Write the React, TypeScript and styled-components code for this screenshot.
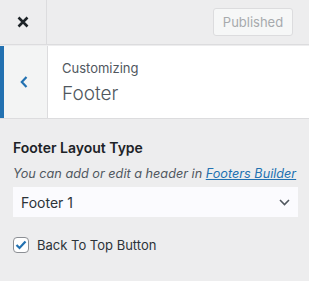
import React from 'react';
import styled, { createGlobalStyle } from 'styled-components';

const GlobalStyle = createGlobalStyle`
  html, body {
    margin: 0;
    padding: 0;
    background: #ededee;
  }
  body {
    font-family: Inter, "Liberation Sans", Arial, sans-serif;
    color: #1d2327;
  }
`;

const Panel = styled.div`
  width: 309px;
  height: 281px;
  background: #ededee;
  display: flex;
  flex-direction: column;
`;

const Header = styled.div`
  height: 44px;
  display: flex;
  align-items: stretch;
  border-bottom: 1px solid #dcdcde;
  background: #ededee;
`;

const CloseButton = styled.button`
  width: 47px;
  border: none;
  border-right: 1px solid #dcdcde;
  background: transparent;
  display: flex;
  align-items: center;
  justify-content: center;
  padding: 0;
`;

const HeaderActions = styled.div`
  flex: 1;
  display: flex;
  align-items: center;
  justify-content: flex-end;
  padding-right: 16px;
`;

const PublishButton = styled.button`
  width: 80px;
  height: 28px;
  border: 1px solid #dcdcde;
  border-radius: 3px;
  background: #f6f7f7;
  color: #a7aaad;
  font-family: inherit;
  font-size: 13px;
  padding: 0;
`;

const SectionTitle = styled.div`
  height: 72px;
  display: flex;
  background: #fff;
  border-bottom: 1px solid #dcdcde;
  margin-top: 1px;
`;

const BackButton = styled.button`
  width: 48px;
  border: none;
  border-left: 4px solid #2271b1;
  border-right: 1px solid #dcdcde;
  background: #f3f4f4;
  display: flex;
  align-items: center;
  justify-content: center;
  padding: 0 3px 0 0;
`;

const TitleText = styled.div`
  display: flex;
  flex-direction: column;
  padding: 13px 0 0 14px;
`;

const Eyebrow = styled.span`
  font-size: 13px;
  color: #50575e;
  line-height: 18px;
`;

const Heading = styled.h3`
  margin: 4px 0 0;
  font-size: 19px;
  font-weight: 300;
  color: #50575e;
  line-height: 26px;
`;

const Body = styled.div`
  padding: 19px 11px 0 13px;
  display: flex;
  flex-direction: column;
`;

const ControlTitle = styled.div`
  font-size: 14px;
  font-weight: 600;
  color: #1d2327;
  line-height: 20px;
`;

const Description = styled.div`
  font-size: 12.7px;
  font-style: italic;
  color: #50575e;
  line-height: 20px;
  margin-top: 6px;
  white-space: nowrap;
`;

const Link = styled.a`
  color: #2271b1;
  text-decoration: underline;
`;

const Select = styled.div`
  margin-top: 3px;
  height: 30px;
  background: #fbfbfe;
  display: flex;
  align-items: center;
  justify-content: space-between;
  padding: 0 8px 0 8px;
  font-size: 14px;
  color: #2c3338;
`;

const CheckRow = styled.label`
  margin-top: 20px;
  display: flex;
  align-items: center;
  gap: 8px;
  font-size: 13px;
  color: #2c3338;
`;

const Box = styled.span`
  width: 14px;
  height: 14px;
  border: 1px solid #8c8f94;
  border-radius: 4px;
  background: #fff;
  display: flex;
  align-items: center;
  justify-content: center;
`;

export default function App() {
  return (
    <Panel>
      <GlobalStyle />
      <Header>
        <CloseButton aria-label="Close">
          <svg width="12" height="12" viewBox="0 0 12 12">
            <path d="M1.5 1.5 L10.5 10.5 M10.5 1.5 L1.5 10.5" stroke="#1d2327" strokeWidth="2.6" strokeLinecap="butt" />
          </svg>
        </CloseButton>
        <HeaderActions>
          <PublishButton disabled>Published</PublishButton>
        </HeaderActions>
      </Header>
      <SectionTitle>
        <BackButton aria-label="Back">
          <svg width="8" height="12" viewBox="0 0 8 12">
            <path d="M6.5 1 L1.8 6 L6.5 11" fill="none" stroke="#2271b1" strokeWidth="2.2" />
          </svg>
        </BackButton>
        <TitleText>
          <Eyebrow>Customizing</Eyebrow>
          <Heading>Footer</Heading>
        </TitleText>
      </SectionTitle>
      <Body>
        <ControlTitle>Footer Layout Type</ControlTitle>
        <Description>
          You can add or edit a header in <Link href="#">Footers Builder</Link>
        </Description>
        <Select>
          <span>Footer 1</span>
          <svg width="11" height="7" viewBox="0 0 11 7">
            <path d="M1 1 L5.5 5.5 L10 1" fill="none" stroke="#50575e" strokeWidth="1.6" />
          </svg>
        </Select>
        <CheckRow>
          <Box>
            <svg width="12" height="10" viewBox="0 0 12 10">
              <path d="M1.5 5 L4.5 8 L10.5 1.5" fill="none" stroke="#2271b1" strokeWidth="2.2" />
            </svg>
          </Box>
          Back To Top Button
        </CheckRow>
      </Body>
    </Panel>
  );
}
